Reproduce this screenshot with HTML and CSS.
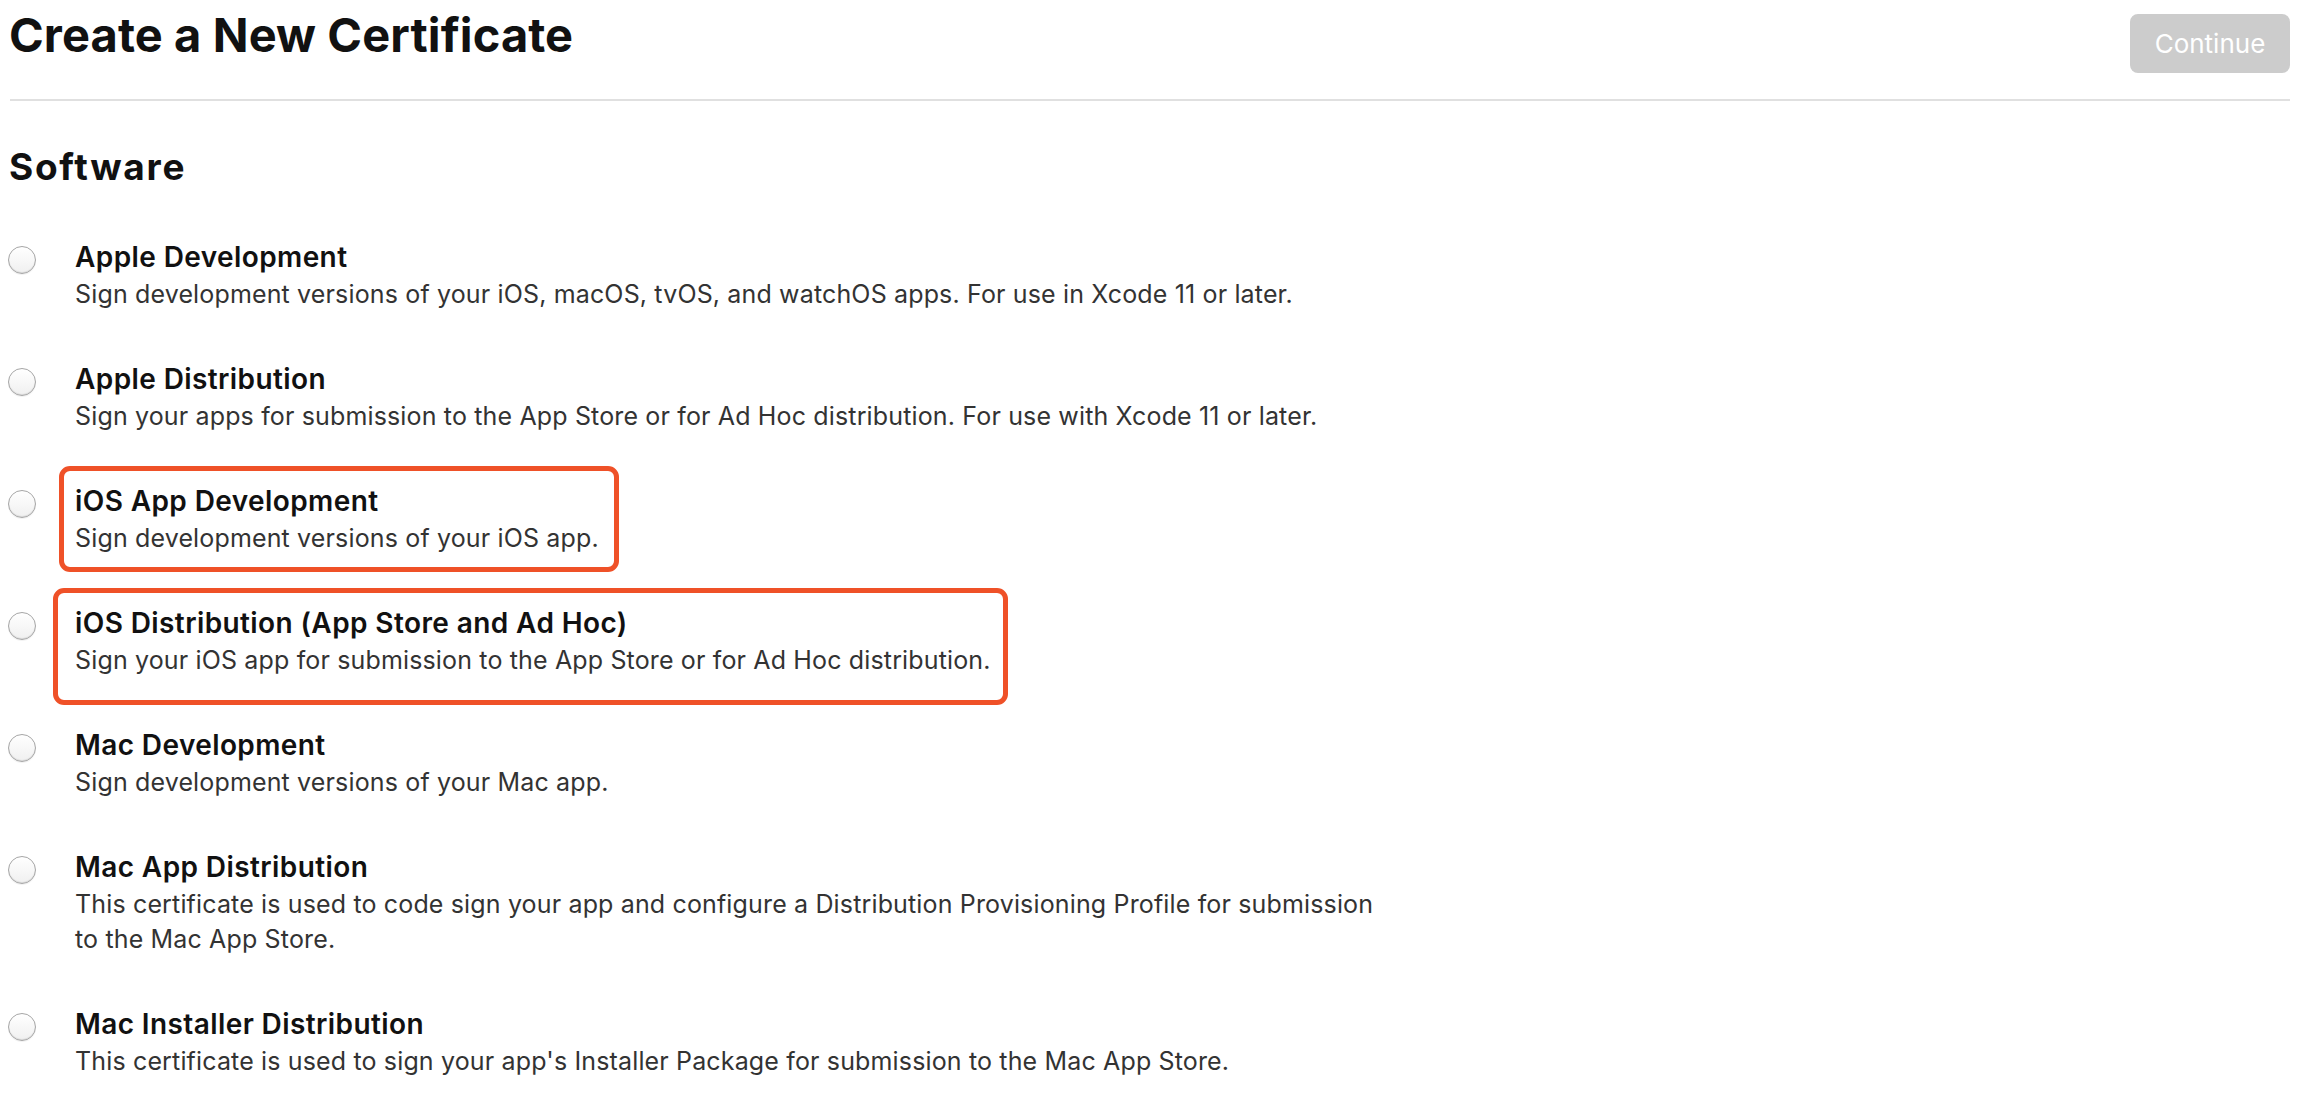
FILE: index.html
```html
<!DOCTYPE html>
<html lang="en">
<head>
<meta charset="utf-8">
<title>Create a New Certificate</title>
<link rel="stylesheet" href="styles.css">
</head>
<body>
<main class="page">
  <header class="page-header">
    <h1 class="page-title">Create a New Certificate</h1>
    <button class="btn-continue" type="button" disabled>Continue</button>
  </header>
  <hr class="divider">
  <h2 class="section-title">Software</h2>
  <ul class="cert-list">
    <li class="cert-item">
      <span class="radio"></span>
      <div class="cert-text">
        <div class="cert-name">Apple Development</div>
        <div class="cert-desc">Sign development versions of your iOS, macOS, tvOS, and watchOS apps. For use in Xcode 11 or later.</div>
      </div>
    </li>
    <li class="cert-item">
      <span class="radio"></span>
      <div class="cert-text">
        <div class="cert-name">Apple Distribution</div>
        <div class="cert-desc">Sign your apps for submission to the App Store or for Ad Hoc distribution. For use with Xcode 11 or later.</div>
      </div>
    </li>
    <li class="cert-item">
      <span class="radio"></span>
      <div class="cert-text marked mark-a">
        <div class="cert-name">iOS App Development</div>
        <div class="cert-desc">Sign development versions of your iOS app.</div>
      </div>
    </li>
    <li class="cert-item">
      <span class="radio"></span>
      <div class="cert-text marked mark-b">
        <div class="cert-name">iOS Distribution (App Store and Ad Hoc)</div>
        <div class="cert-desc">Sign your iOS app for submission to the App Store or for Ad Hoc distribution.</div>
      </div>
    </li>
    <li class="cert-item">
      <span class="radio"></span>
      <div class="cert-text">
        <div class="cert-name">Mac Development</div>
        <div class="cert-desc">Sign development versions of your Mac app.</div>
      </div>
    </li>
    <li class="cert-item">
      <span class="radio"></span>
      <div class="cert-text">
        <div class="cert-name">Mac App Distribution</div>
        <div class="cert-desc">This certificate is used to code sign your app and configure a Distribution Provisioning Profile for submission to the Mac App Store.</div>
      </div>
    </li>
    <li class="cert-item">
      <span class="radio"></span>
      <div class="cert-text">
        <div class="cert-name">Mac Installer Distribution</div>
        <div class="cert-desc">This certificate is used to sign your app's Installer Package for submission to the Mac App Store.</div>
      </div>
    </li>
  </ul>
</main>
</body>
</html>
```

FILE: styles.css
```css
*,
*::before,
*::after {
  box-sizing: border-box;
}

html, body {
  margin: 0;
  padding: 0;
  background: #ffffff;
}

body {
  font-family: Inter, "Noto Sans", "Liberation Sans", sans-serif;
  color: #111111;
}

.page {
  padding: 7px 22px 0 8px;
}

.page-header {
  display: flex;
  justify-content: space-between;
  align-items: flex-start;
}

.page-title {
  margin: 0;
  font-size: 47px;
  line-height: 56px;
  font-weight: 700;
  letter-spacing: 0.1px;
  color: #111111;
  padding-left: 1px;
}

.btn-continue {
  margin-top: 7px;
  width: 160px;
  height: 59px;
  border: none;
  border-radius: 8px;
  background: #cccccc;
  color: #ffffff;
  font-family: Inter, "Noto Sans", "Liberation Sans", sans-serif;
  font-size: 26px;
  font-weight: 400;
  padding: 0;
}

.divider {
  margin: 26px 0 0 2px;
  border: none;
  border-top: 2px solid #e0e0e0;
  height: 0;
}

.section-title {
  margin: 43px 0 0 0;
  font-size: 37px;
  line-height: 45px;
  font-weight: 700;
  letter-spacing: 1.7px;
  color: #111111;
  padding-left: 1px;
}

.cert-list {
  list-style: none;
  margin: 48px 0 0 0;
  padding: 0;
  display: flex;
  flex-direction: column;
  gap: 47px;
}

.cert-item {
  display: flex;
  align-items: flex-start;
  gap: 39px;
}

.radio {
  flex: none;
  width: 28px;
  height: 28px;
  margin-top: 9px;
  border-radius: 50%;
  border: 1px solid #a6a6a6;
  background: linear-gradient(#ffffff, #f0f0f0);
  box-shadow: inset 0 -1px 1px rgba(0, 0, 0, 0.1), 0 1px 0 rgba(0, 0, 0, 0.05);
}

.cert-text {
  position: relative;
  max-width: 1310px;
}

.cert-name {
  font-size: 28px;
  line-height: 40px;
  font-weight: 600;
  letter-spacing: 0.4px;
  color: #111111;
}

.cert-desc {
  font-size: 25px;
  line-height: 35px;
  font-weight: 400;
  letter-spacing: 0.15px;
  color: #333333;
}

.marked::before {
  content: "";
  position: absolute;
  border: 5px solid #ef5128;
  border-radius: 11px;
  pointer-events: none;
}

.mark-a::before {
  left: -16px;
  top: -15px;
  width: 560px;
  height: 106px;
}

.mark-b::before {
  left: -22px;
  top: -15px;
  width: 955px;
  height: 117px;
}
```
